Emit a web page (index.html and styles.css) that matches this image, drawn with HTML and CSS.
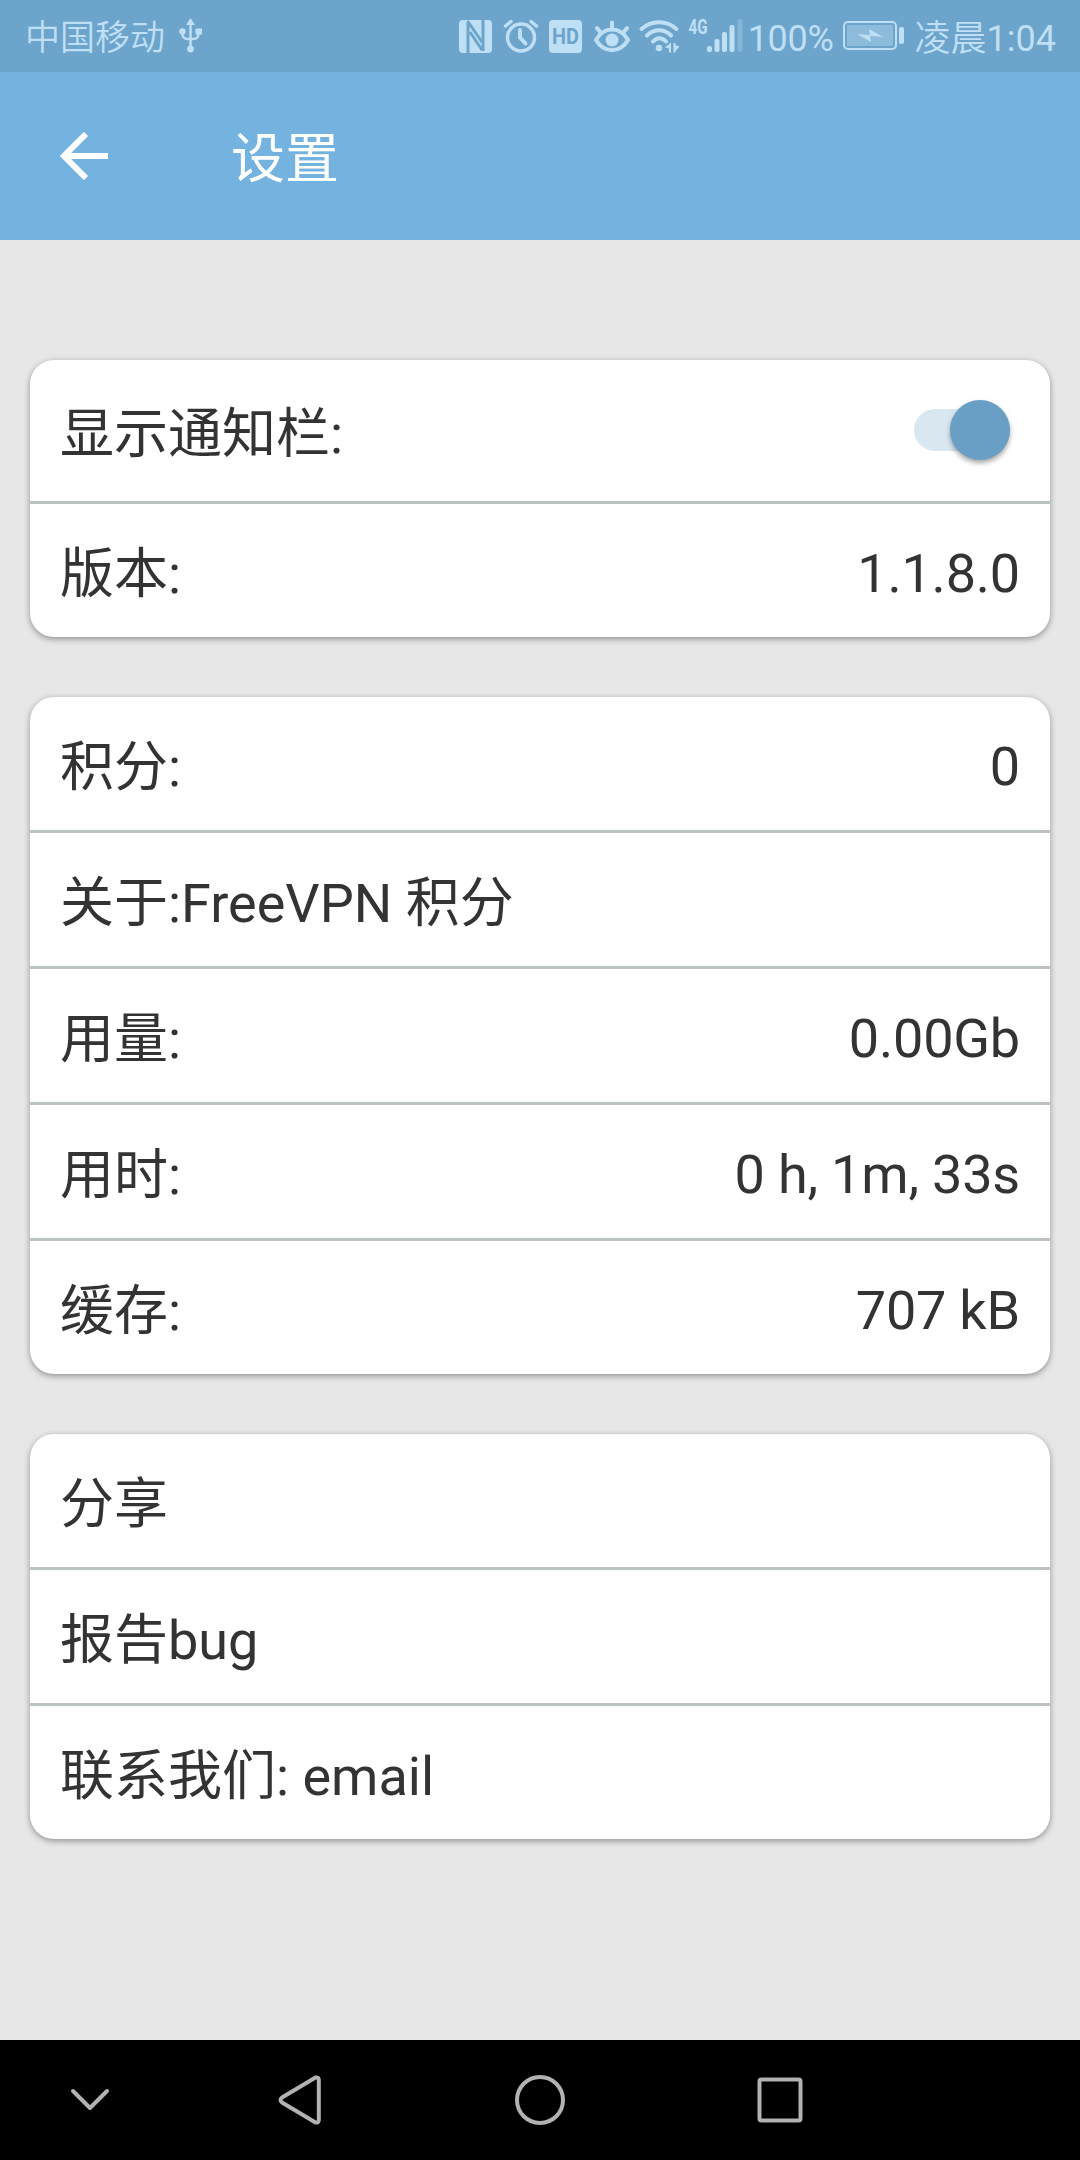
FILE: index.html
```html
<!DOCTYPE html>
<html lang="zh-CN">
<head>
<meta charset="UTF-8">
<meta name="viewport" content="width=device-width, initial-scale=1.0">
<title>设置</title>
<link rel="stylesheet" href="styles.css">
</head>
<body>

<div class="statusbar">
    <span class="carrier">中国移动</span>
    <svg class="usb" width="24" height="36" viewBox="0 0 24 36">
        <path d="M11.500 5v26M3.500 14v2c0 3 2 5 5 5h6c3 0 5-2 5-5v-2" fill="none" stroke="currentColor" stroke-width="2.500"/>
        <path d="M11.500 0l4.500 7h-9z"/>
        <circle cx="3.500" cy="13.500" r="3.200"/>
        <circle cx="11.500" cy="31" r="3.400"/>
        <rect x="16.500" y="10.500" width="6.500" height="6"/>
    </svg>

    <svg class="icons" width="290" height="56" viewBox="456 8 290 56">
        <!-- nfc -->
        <rect x="459" y="20" width="33" height="33" rx="4"/>
        <path class="cut" d="M468 22v31M467.500 21l14.500 21M470 32l12 18M483 20v31"/>
        <!-- alarm -->
        <g class="line" stroke-width="3.500">
            <circle cx="521" cy="37.500" r="13.500"/>
            <path d="M520 30v7.500l5.500 6" stroke-width="4"/>
            <path d="M505.500 26l5.500-4.500M531 21.500l5.500 4.500"/>
        </g>
        <!-- hd -->
        <rect x="549" y="20" width="33" height="33" rx="4"/>
        <text class="hd" x="565.500" y="44" text-anchor="middle" textLength="27" lengthAdjust="spacingAndGlyphs">HD</text>
        <!-- eye -->
        <g class="line" stroke-width="4">
            <path d="M596 40c8-14 24-14 32 0c-8 13.500-24 13.500-32 0z"/>
            <path d="M612 22.500v6M597 28l4 5M627 28l-4 5"/>
        </g>
        <circle cx="612" cy="40" r="6.500"/>
        <!-- wifi -->
        <g class="line" stroke-width="4">
            <path d="M641.500 29c10-9 25-9 35 0"/>
            <path d="M647 35.500c7-7 17-7 24 0"/>
            <path d="M653 41.500c4-4.500 9-4.500 13 0"/>
        </g>
        <circle cx="659" cy="48" r="3.300"/>
        <path d="M665 47.500l6-5v10h-2v-4zM673.500 43h1.800v2l4.200 1.500l-4.200 5v1h-1.800z"/>
        <!-- signal -->
        <text class="net" x="688.500" y="34" textLength="19" lengthAdjust="spacingAndGlyphs">4G</text>
        <rect x="707" y="46" width="5" height="6" rx="2"/>
        <rect x="714.500" y="39" width="5" height="13" rx="2"/>
        <rect x="722" y="32" width="5" height="20" rx="2"/>
        <rect x="729.500" y="25" width="5" height="27" rx="2"/>
        <rect x="737.500" y="19" width="5" height="33" rx="2" opacity=".3"/>
    </svg>
    <span class="percent">100%</span>
    <svg class="battery" width="62" height="30" viewBox="0 0 62 30">
        <rect x="1" y="1" width="52" height="27" rx="4" fill="none" stroke="currentColor" stroke-width="2"/>
        <rect x="4" y="4" width="46" height="21" opacity=".4"/>
        <rect x="56" y="6" width="5" height="17" rx="2"/>
        <path d="M14 13l13 1l-1-6l14 8l-13-1l1 6z"/>
    </svg>
    <span class="clock"><span class="period">凌晨</span>1:04</span>
</div>

<div class="toolbar">
    <svg class="back" width="48" height="48" viewBox="0 0 48 48">
        <path d="M26 2L4 24L26 46M3 24H48" />
    </svg>
    <h1>设置</h1>
</div>

<div class="content">
    <div class="card">
        <div class="row tall">
            <span>显示通知栏:</span>
            <div class="switch"><div class="thumb"></div></div>
        </div>
        <div class="row"><span>版本:</span><span class="value">1.1.8.0</span></div>
    </div>

    <div class="card">
        <div class="row"><span>积分:</span><span class="value">0</span></div>
        <div class="row"><span>关于:FreeVPN 积分</span></div>
        <div class="row"><span>用量:</span><span class="value">0.00Gb</span></div>
        <div class="row"><span>用时:</span><span class="value">0 h, 1m, 33s</span></div>
        <div class="row"><span>缓存:</span><span class="value">707 kB</span></div>
    </div>

    <div class="card">
        <div class="row"><span>分享</span></div>
        <div class="row"><span>报告bug</span></div>
        <div class="row"><span>联系我们: email</span></div>
    </div>
</div>

<div class="navbar">
    <svg width="180" height="120" viewBox="0 0 180 120"><path d="M73 51l17 17l17-17"/></svg>
    <svg width="240" height="120" viewBox="0 0 240 120"><path d="M135.500 37.500L102 57.500Q99 60 102 62.500L135.500 82.500Q138.800 83 138.800 80V40Q138.800 37 135.500 37.500z"/></svg>
    <svg width="240" height="120" viewBox="0 0 240 120"><circle cx="120" cy="60" r="23"/></svg>
    <svg width="240" height="120" viewBox="0 0 240 120"><rect x="99.500" y="39.500" width="41" height="41" rx="2"/></svg>
</div>

</body>
</html>
```
FILE: styles.css
```css
* {
    box-sizing: border-box;
}
body {
    margin: 0;
    width: 1080px;
    height: 2160px;
    display: flex;
    flex-direction: column;
    overflow: hidden;
    background: #e7e7e7;
    color: #333;
    font-family: Roboto, "Noto Sans CJK SC", sans-serif;
    font-size: 54px;
}
svg {
    display: block;
    flex: none;
    fill: currentColor;
}
.statusbar {
    height: 72px;
    display: flex;
    align-items: center;
    padding: 0 24px 0 25px;
    background: #6ca4cc;
    color: #bfdff4;
    font-size: 36px;
    line-height: 66px;
    white-space: nowrap;
}
.carrier, .percent, .clock {
    padding-top: 5px;
}
.carrier {
    font-size: 35px;
    font-weight: 350;
}
.usb {
    margin-left: 14px;
}
.icons {
    margin-left: auto;
}
.line {
    fill: none;
    stroke: currentColor;
    stroke-linecap: round;
}
.cut {
    fill: none;
    stroke: #6ca4cc;
    stroke-width: 3;
}
.hd {
    fill: #6ca4cc;
    font-size: 22px;
    font-weight: bold;
}
.net {
    font-size: 21px;
    font-weight: bold;
}
.percent {
    margin-left: 2px;
    letter-spacing: -0.3px;
}
.battery {
    margin-left: 9px;
}
.clock {
    margin-left: 10px;
}
.period {
    font-weight: 350;
}
.toolbar {
    height: 168px;
    display: flex;
    align-items: center;
    padding: 0 60px;
    background: #74b2df;
    color: #fff;
}
.back path {
    fill: none;
    stroke: #fff;
    stroke-width: 6;
}
h1 {
    margin: -3px 0 0 123px;
    font-size: 54px;
    font-weight: 400;
}
.content {
    flex: 1;
    display: flex;
    flex-direction: column;
    gap: 60px;
    padding: 120px 30px 0;
}
.card {
    background: #fff;
    border-radius: 24px;
    box-shadow: 0 2px 6px rgba(0, 0, 0, 0.38);
}
.row {
    height: 133px;
    display: flex;
    align-items: center;
    justify-content: space-between;
    padding: 0 30px;
    line-height: 72px;
}
.row > span {
    padding-top: 8px;
}
.row > .value {
    padding-top: 6px;
    letter-spacing: -0.2px;
}
.row + .row {
    height: 136px;
    border-top: 3px solid #bcc2c2;
}
.row.tall {
    height: 141px;
}
.switch {
    width: 96px;
    height: 42px;
    margin: 0 10px 1px 0;
    display: flex;
    align-items: center;
    justify-content: flex-end;
    border-radius: 21px;
    background: #d9e7f0;
}
.thumb {
    width: 60px;
    height: 60px;
    border-radius: 50%;
    background: #6a9fc5;
    box-shadow: 0 3px 5px rgba(0, 0, 0, 0.35);
}
.navbar {
    height: 120px;
    display: flex;
    background: #000;
}
.navbar svg {
    fill: none;
    stroke: #b2b2b2;
    stroke-width: 4;
    stroke-linecap: round;
    stroke-linejoin: round;
}
```
